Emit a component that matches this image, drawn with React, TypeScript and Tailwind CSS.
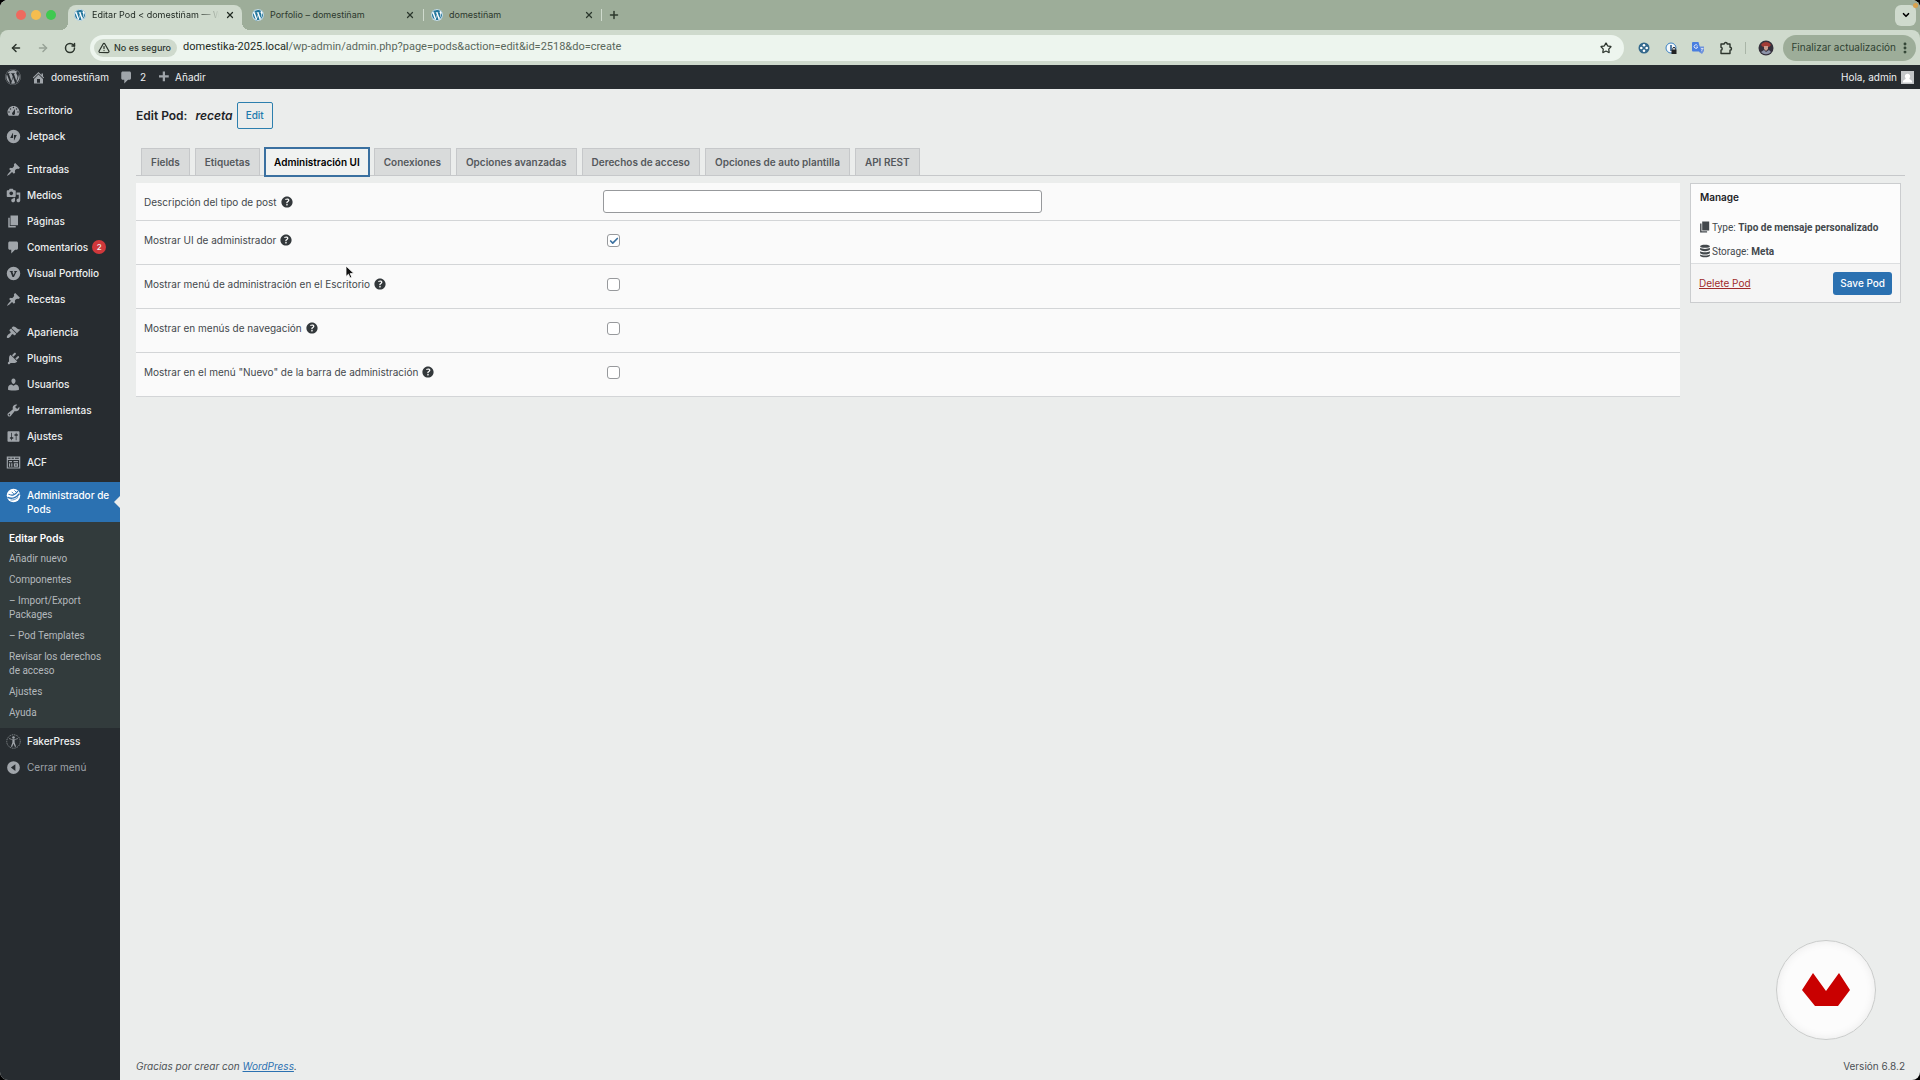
import type { ReactNode } from 'react'
import {
  ArrowLeft,
  ArrowRight,
  Check,
  ChevronDown,
  EllipsisVertical,
  Plus,
  RotateCw,
  Star,
  TriangleAlert,
  X,
} from 'lucide-react'
import { FaWordpress } from 'react-icons/fa'
import clsx from 'clsx'

type IconProps = { className?: string }

/* Dashicons, 20x20 grid */
const DASHICONS = {
  home: 'M16 8.5l1.53 1.53-1.06 1.06L10 4.6l-6.47 6.49-1.06-1.06L10 2.5l4 4v-2h2v4zm-6-2.46l6 5.99V18H4v-5.97zM12 17v-5H8v5h4z',
  plus: 'M17 7v3h-5v5H9v-5H4V7h5V2h3v5h5z',
  dashboard:
    'M3.76 17h12.48c1.1-1.37 1.76-3.11 1.76-5 0-4.42-3.58-8-8-8s-8 3.58-8 8c0 1.89.66 3.63 1.76 5zM10 5c.55 0 1 .45 1 1s-.45 1-1 1-1-.45-1-1 .45-1 1-1zM6 7c.55 0 1 .45 1 1s-.45 1-1 1-1-.45-1-1 .45-1 1-1zm8 0c.55 0 1 .45 1 1s-.45 1-1 1-1-.45-1-1 .45-1 1-1zm-5.37 5.55L12 8v6c0 1.1-.9 2-2 2s-2-.9-2-2c0-.57.24-1.08.63-1.45zM4 11c.55 0 1 .45 1 1s-.45 1-1 1-1-.45-1-1 .45-1 1-1zm12 0c.55 0 1 .45 1 1s-.45 1-1 1-1-.45-1-1 .45-1 1-1z',
  jetpack: 'M10 1a9 9 0 100 18 9 9 0 000-18zM9.4 11.9H5.6L9.4 4.5v7.4zm1.2 3.6V8.1h3.8l-3.8 7.4z',
  pin: 'M10.44 3.02l1.82-1.82 6.36 6.35-1.83 1.82c-1.05-.68-2.48-.57-3.41.36l-.75.75c-.92.93-1.04 2.35-.35 3.41l-1.83 1.82-2.41-2.41-2.8 2.79c-.42.42-3.38 2.71-3.8 2.29s1.86-3.39 2.28-3.81l2.79-2.79L4.1 9.36l1.83-1.82c1.05.69 2.48.57 3.4-.36l.75-.75c.93-.92 1.05-2.35.36-3.41z',
  media:
    'M13 11V4c0-.55-.45-1-1-1h-1.67L9 1H5L3.67 3H2c-.55 0-1 .45-1 1v7c0 .55.45 1 1 1h10c.55 0 1-.45 1-1zM7 4.5c1.38 0 2.5 1.12 2.5 2.5S8.38 9.5 7 9.5 4.5 8.38 4.5 7 5.62 4.5 7 4.5zM14 6h5v10.5c0 1.38-1.12 2.5-2.5 2.5S14 17.88 14 16.5s1.12-2.5 2.5-2.5c.17 0 .34.02.5.05V9h-3V6zm-4 8.05V13h2v3.5c0 1.38-1.12 2.5-2.5 2.5S7 17.88 7 16.5 8.12 14 9.5 14c.17 0 .34.02.5.05z',
  page: 'M6 15V2h10v13H6zm-1 1h8v2H3V5h2v11z',
  comments:
    'M5 2h9c1.1 0 2 .9 2 2v7c0 1.1-.9 2-2 2h-2l-5 5v-5H5c-1.1 0-2-.9-2-2V4c0-1.1.9-2 2-2z',
  visual: 'M10 1a9 9 0 100 18 9 9 0 000-18zM5 6.5h4.2v1.2h-.8l1.9 4.4 1.5-4.4h-1V6.5h4v1.2h-.9L10.600 14.500H8.600L6 7.700H5z',
  appearance:
    'M14.48 11.06L7.41 3.99l1.5-1.5c.5-.56 2.3-.47 3.51.32 1.21.8 1.43 1.28 2.91 2.1 1.18.64 2.45 1.26 4.45.85zm-.71.71L6.7 4.7 4.93 6.47c-.39.39-.39 1.02 0 1.41l1.06 1.06c.39.39.39 1.03 0 1.42-.6.6-1.43 1.11-2.21 1.69-.35.26-.7.53-1.01.84C1.43 14.23.4 16.08 1.4 17.07c.99 1 2.84-.03 4.18-1.36.31-.31.58-.66.85-1.02.57-.78 1.08-1.61 1.69-2.21.39-.39 1.02-.39 1.41 0l1.06 1.06c.39.39 1.02.39 1.41 0z',
  plugins:
    'M13.11 4.36L9.87 7.6 8 5.73l3.24-3.24c.35-.34 1.05-.2 1.56.32.52.51.66 1.21.31 1.55zm-8 1.77l.91-1.12 9.01 9.01-1.19.84c-.71.71-2.63 1.16-3.82 1.16H6.14L4.9 17.26c-.59.59-1.54.59-2.12 0-.59-.58-.59-1.53 0-2.12l1.24-1.24v-3.88c0-1.13.4-3.19 1.09-3.89zm7.26 3.97l3.24-3.24c.34-.35 1.04-.21 1.55.31.52.51.66 1.21.31 1.55l-3.24 3.25z',
  users:
    'M10 9.25c-2.27 0-2.73-3.44-2.73-3.44C7 4.02 7.82 2 9.97 2c2.16 0 2.98 2.02 2.71 3.81 0 0-.41 3.44-2.68 3.44zm0 2.57L12.72 10c2.39 0 4.52 2.33 4.52 4.53v2.49s-3.65 1.13-7.24 1.13c-3.65 0-7.24-1.13-7.24-1.13v-2.49c0-2.25 1.94-4.48 4.47-4.48z',
  tools:
    'M16.68 9.77c-1.34 1.34-3.3 1.67-4.95.99l-5.41 6.52c-.99.99-2.59.99-3.58 0s-.99-2.59 0-3.57l6.52-5.42c-.68-1.65-.35-3.61.99-4.95 1.28-1.28 3.12-1.62 4.72-1.06l-2.89 2.89 2.82 2.82 2.86-2.87c.53 1.58.18 3.39-1.08 4.65zM3.81 16.21c.4.39 1.04.39 1.43 0 .4-.4.4-1.04 0-1.43-.39-.4-1.03-.4-1.43 0-.39.39-.39 1.03 0 1.43z',
  settings:
    'M18 16V4c0-.55-.45-1-1-1H3c-.55 0-1 .45-1 1v12c0 .55.45 1 1 1h14c.55 0 1-.45 1-1zM8 11h1c.55 0 1 .45 1 1s-.45 1-1 1H8v1.5c0 .28-.22.5-.5.5s-.5-.22-.5-.5V13H6c-.55 0-1-.45-1-1s.45-1 1-1h1V5.5c0-.28.22-.5.5-.5s.5.22.5.5V11zm5-2h-1c-.55 0-1-.45-1-1s.45-1 1-1h1V5.5c0-.28.22-.5.5-.5s.5.22.5.5V7h1c.55 0 1 .45 1 1s-.45 1-1 1h-1v5.5c0 .28-.22.5-.5.5s-.5-.22-.5-.5V9z',
  acf: 'M1 2h18v16H1zM2.500 6.500v10h15v-10zM3 3.500v1.500h3V3.500zm4.500 0v1.500h3V3.500zm4.500 0v1.500h5V3.500zM4 8h4v1.500H4zm6 0h6v1.500h-6zM4 11h1.500v4.500H4zm3 0h1.500v4.500H7zm3.500 0H16v4.500h-5.500zm1.500 1.500v1.500h2.500v-1.500z',
  collapse: 'M10 1.500a8.500 8.500 0 100 17 8.500 8.500 0 000-17zM12.500 5.500v9L6.500 10z',
  help: 'M17 10c0-3.87-3.14-7-7-7-3.87 0-7 3.13-7 7s3.13 7 7 7c3.86 0 7-3.13 7-7zm-6.3 1.48H9.14v-.43c0-.38.08-.7.24-.98s.46-.57.88-.89c.41-.29.68-.53.81-.71.14-.18.2-.39.2-.62 0-.25-.09-.44-.28-.58-.19-.13-.45-.19-.79-.19-.58 0-1.25.19-2 .57l-.64-1.28c.87-.49 1.8-.74 2.77-.74.81 0 1.45.2 1.92.58.48.39.71.91.71 1.55 0 .43-.09.8-.29 1.11-.19.32-.57.67-1.11 1.06-.38.28-.61.49-.71.63-.1.15-.15.34-.15.57v.35zm-1.47 2.74c-.18-.17-.27-.42-.27-.73 0-.33.08-.58.26-.75s.43-.25.77-.25c.32 0 .57.09.75.26s.27.42.27.74c0 .3-.09.55-.27.72-.18.18-.43.27-.75.27-.33 0-.58-.09-.76-.26z',
  database:
    'M10 1c4 0 7 .9 7 2.200S14 5.500 10 5.500 3 4.500 3 3.200 6 1 10 1zM3 5.500c1.500 1 4 1.500 7 1.500s5.500-.5 7-1.500V8c0 1.200-3 2.200-7 2.200S3 9.200 3 8zM3 10.200c1.500 1 4 1.500 7 1.500s5.500-.5 7-1.500v2.500c0 1.200-3 2.200-7 2.200s-7-1-7-2.200zM3 14.900c1.500 1 4 1.500 7 1.500s5.500-.5 7-1.500v1.900c0 1.200-3 2.200-7 2.200s-7-1-7-2.200z',
}

type DashiconName = keyof typeof DASHICONS

function Dashicon({ name, className }: IconProps & { name: DashiconName }) {
  return (
    <svg viewBox="0 0 20 20" fill="currentColor" fillRule="evenodd" aria-hidden="true" className={clsx('shrink-0', className)}>
      <path d={DASHICONS[name]} />
    </svg>
  )
}

function PodsIcon({ className }: IconProps) {
  return (
    <svg viewBox="0 0 20 20" aria-hidden="true" className={className}>
      <circle cx="10" cy="10" r="9" fill="#fff" />
      <g fill="none" stroke="#2e72b2" strokeLinecap="round">
        <path d="M4 8.500c3.500 2 8.500 1 11.500-4" strokeWidth="1.500" />
        <path d="M2.500 12.500c5 2.500 11.500.5 15-4.500" strokeWidth="1.800" />
        <path d="M8 5.500l2 2M11.500 3.500l2 2" strokeWidth="1.200" />
        <path d="M6.500 16c3.500.5 7-1 9.500-3.500" strokeWidth="1" />
      </g>
    </svg>
  )
}

function FakerPressIcon({ className }: IconProps) {
  return (
    <svg viewBox="0 0 20 20" aria-hidden="true" className={className}>
      <circle cx="10" cy="10" r="9" fill="none" stroke="currentColor" strokeWidth="1" strokeDasharray="1.500 1" />
      <circle cx="10" cy="4.700" r="1.700" fill="currentColor" />
      <path d="M4 6.800l4.500 1v3.400L6.500 17h1.700L10 12.500l1.800 4.500h1.700l-2-5.800V7.800l4.500-1-.3-1L11.500 7h-3L4.300 5.800z" fill="currentColor" />
    </svg>
  )
}

type MenuItem = {
  label: string
  icon: DashiconName
  count?: number
}

const MENU_GROUPS: MenuItem[][] = [
  [
    { label: 'Escritorio', icon: 'dashboard' },
    { label: 'Jetpack', icon: 'jetpack' },
  ],
  [
    { label: 'Entradas', icon: 'pin' },
    { label: 'Medios', icon: 'media' },
    { label: 'Páginas', icon: 'page' },
    { label: 'Comentarios', icon: 'comments', count: 2 },
    { label: 'Visual Portfolio', icon: 'visual' },
    { label: 'Recetas', icon: 'pin' },
  ],
  [
    { label: 'Apariencia', icon: 'appearance' },
    { label: 'Plugins', icon: 'plugins' },
    { label: 'Usuarios', icon: 'users' },
    { label: 'Herramientas', icon: 'tools' },
    { label: 'Ajustes', icon: 'settings' },
    { label: 'ACF', icon: 'acf' },
  ],
]

const SUBMENU = [
  'Editar Pods',
  'Añadir nuevo',
  'Componentes',
  '– Import/Export Packages',
  '– Pod Templates',
  'Revisar los derechos de acceso',
  'Ajustes',
  'Ayuda',
]

const TABS = [
  'Fields',
  'Etiquetas',
  'Administración UI',
  'Conexiones',
  'Opciones avanzadas',
  'Derechos de acceso',
  'Opciones de auto plantilla',
  'API REST',
]

const CHECKBOX_ROWS = [
  { id: 'show-ui', label: 'Mostrar UI de administrador', checked: true },
  { id: 'show-in-menu', label: 'Mostrar menú de administración en el Escritorio', checked: false },
  { id: 'show-in-nav-menus', label: 'Mostrar en menús de navegación', checked: false },
  { id: 'show-in-admin-bar', label: 'Mostrar en el menú "Nuevo" de la barra de administración', checked: false },
]

function Favicon() {
  return (
    <span className="flex size-3 shrink-0 items-center justify-center rounded-full bg-white">
      <FaWordpress className="size-3 text-[#21759b]" />
    </span>
  )
}

function BrowserTab({ title, active }: { title: string; active?: boolean }) {
  return (
    <div
      className={clsx(
        'flex items-center gap-1.5 pl-1.5 pr-[7px] text-[9px]',
        active
          ? "relative mt-[5px] h-[25px] w-[174px] rounded-t-lg bg-[#cfdacd] pb-[5px] text-[#222b24] before:absolute before:-left-2 before:bottom-0 before:size-2 before:bg-[radial-gradient(circle_at_0_0,transparent_8px,#cfdacd_8px)] before:content-[''] after:absolute after:-right-2 after:bottom-0 after:size-2 after:bg-[radial-gradient(circle_at_100%_0,transparent_8px,#cfdacd_8px)] after:content-['']"
          : 'h-[30px] w-[176px] text-[#2c382d]'
      )}
    >
      <Favicon />
      <span
        className={clsx(
          'min-w-0 flex-1 overflow-hidden whitespace-nowrap',
          active && '[mask-image:linear-gradient(to_right,#000_85%,transparent)]'
        )}
      >
        {title}
      </span>
      <button type="button" aria-label="Cerrar pestaña">
        <X className="size-2.5" strokeWidth={3} />
      </button>
    </div>
  )
}

function TabStrip() {
  return (
    <div className="flex h-[30px] items-center pl-4 pr-1">
      <div className="mr-3 flex gap-[5px]">
        <span className="size-2.5 rounded-full bg-[#ee6a5f]" />
        <span className="size-2.5 rounded-full bg-[#f5bd4f]" />
        <span className="size-2.5 rounded-full bg-[#3fc950]" />
      </div>
      <BrowserTab title="Editar Pod < domestiñam — W" active />
      <div className="ml-1 flex items-center">
        <BrowserTab title="Porfolio – domestiñam" />
        <span className="mx-px h-3 w-px bg-[#cfdacd]" />
        <BrowserTab title="domestiñam" />
        <span className="h-3 w-px bg-[#cfdacd]" />
      </div>
      <button type="button" aria-label="Nueva pestaña" className="ml-1.5">
        <Plus className="size-3 text-[#2c382d]" strokeWidth={3} />
      </button>
      <button
        type="button"
        aria-label="Buscar pestañas"
        className="relative ml-auto flex size-[21px] items-center justify-center rounded-md bg-[#cfdacd]"
      >
        <ChevronDown className="size-2.5" strokeWidth={4} />
        <span className="absolute -right-0.5 -top-0.5 size-[5px] rounded-full bg-[#d9a14c]" />
      </button>
    </div>
  )
}

function Toolbar() {
  return (
    <div className="flex h-[35px] items-center rounded-t-lg bg-[#cfdacd] pl-2.5 pr-1 text-[#2c352d]">
      <div className="flex items-center gap-[15px]">
        <button type="button" aria-label="Atrás">
          <ArrowLeft className="size-3" strokeWidth={3} />
        </button>
        <button type="button" aria-label="Adelante" className="text-[#98a397]">
          <ArrowRight className="size-3" strokeWidth={3} />
        </button>
        <button type="button" aria-label="Recargar">
          <RotateCw className="size-3" strokeWidth={3} />
        </button>
      </div>
      <div className="ml-3.5 flex h-[26px] min-w-0 flex-1 items-center rounded-full bg-[#edf5ee] pl-1 pr-3">
        <span className="flex h-[18px] items-center gap-1 rounded-full bg-[#cfdacd] px-1 pr-1.5 text-[9px] font-medium">
          <TriangleAlert className="size-3" strokeWidth={2.5} />
          No es seguro
        </span>
        <span className="ml-1.5 flex-1 truncate font-[Roboto,sans-serif] text-[11px] text-[#5a685c]">
          <span className="text-[#222b24]">domestika-2025.local</span>
          /wp-admin/admin.php?page=pods&amp;action=edit&amp;id=2518&amp;do=create
        </span>
        <Star className="size-3" strokeWidth={2.5} />
      </div>
      <div className="ml-3.5 flex items-center gap-[15px]">
        <svg viewBox="0 0 12 12" className="size-3" aria-hidden="true">
          <circle cx="6" cy="6" r="5.500" fill="#33688c" />
          <g fill="#fff">
            <circle cx="6" cy="3.300" r="1.300" />
            <circle cx="6" cy="8.700" r="1.300" />
            <circle cx="3.300" cy="6" r="1.300" />
            <circle cx="8.700" cy="6" r="1.300" />
          </g>
        </svg>
        <svg viewBox="0 0 12 12" className="size-3" aria-hidden="true">
          <circle cx="6" cy="6" r="5" fill="#f4f8fb" stroke="#3b82c4" />
          <path d="M5.200 3h1.600v6H5.200z" fill="#2d5f92" />
          <path d="M6.500 7.500h5V12h-5z" fill="#222" />
          <path d="M7.700 7.500V6.700a1.300 1.300 0 012.600 0v.8" fill="none" stroke="#222" />
        </svg>
        <svg viewBox="0 0 12 12" className="size-3" aria-hidden="true">
          <path d="M7 4.500h5V9l-2 3-3-2z" fill="#6f93dc" />
          <path d="M1 0h5.500l2.500 9.500H1a1 1 0 01-1-1V1a1 1 0 011-1z" fill="#4a7fe0" />
          <path d="M5.500 3.600A1.800 1.800 0 105.700 5H4.300" fill="none" stroke="#fff" strokeWidth=".8" />
          <path d="M9 6.500h2.500M10.300 6.500c0 1.500-.5 2.200-1.200 2.700" fill="none" stroke="#fff" strokeWidth=".6" />
        </svg>
        <svg viewBox="0 0 14 14" className="size-3.5" aria-hidden="true">
          <path
            d="M2 3h3.200a1.500 1.500 0 013 0H11v3.200a1.500 1.500 0 010 3v3.300H2V9.300a1.600 1.600 0 000-3.100z"
            fill="none"
            stroke="currentColor"
            strokeWidth="1.400"
            strokeLinejoin="round"
          />
        </svg>
      </div>
      <span className="mx-3 h-3 w-px bg-[#a9b5a7]" />
      <svg viewBox="0 0 16 16" className="size-4" aria-hidden="true">
        <circle cx="8" cy="8" r="7.500" fill="#35313c" />
        <path d="M3 5c2-4 8-4 10 0l-2 2H5z" fill="#a33b35" />
        <path d="M6 6h4v3l-2 2-2-2z" fill="#c99c8d" />
        <path d="M3 12l3-2 2 2 3-2 2 2c-3 3-7 3-10 0z" fill="#8c93a8" />
      </svg>
      <button
        type="button"
        className="ml-[9px] flex h-[26px] items-center gap-0.5 rounded-full bg-[#9dad99] pl-2 pr-1 text-[10px] text-[#2f4232]"
      >
        Finalizar actualización
        <EllipsisVertical className="size-3.5" strokeWidth={3} />
      </button>
    </div>
  )
}

function AdminBar() {
  return (
    <div className="flex h-6 items-center bg-[#272c30] pl-[5px] pr-1.5 text-[10px] text-[#eef0f1]">
      <a href="#wp" aria-label="Acerca de WordPress">
        <FaWordpress className="size-4 text-[#a0a5aa]" />
      </a>
      <a href="#site" className="ml-2.5 flex items-center gap-[5px]">
        <Dashicon name="home" className="size-[15px] text-[#a0a5aa]" />
        domestiñam
      </a>
      <a href="#comments" className="ml-2.5 flex items-center gap-1.5">
        <Dashicon name="comments" className="size-[15px] text-[#a0a5aa]" />2
      </a>
      <a href="#new" className="ml-2.5 flex items-center gap-1">
        <Dashicon name="plus" className="size-[15px] text-[#a0a5aa]" />
        Añadir
      </a>
      <a href="#profile" className="ml-auto flex items-center gap-1">
        Hola, admin
        <svg viewBox="0 0 14 14" className="size-[13px]" aria-hidden="true">
          <path d="M0 0h14v14H0z" fill="#c3c6c8" />
          <path d="M7 3a2.700 2.700 0 012 4.700c0 1 .5 1.300 1.500 1.800 1 .5 1.500 1.500 1.500 3H2c0-1.500.5-2.500 1.500-3S5 8.700 5 7.700A2.700 2.700 0 017 3z" fill="#fff" />
        </svg>
      </a>
    </div>
  )
}

function MenuLink({ icon, children, muted }: { icon: ReactNode; children: ReactNode; muted?: boolean }) {
  return (
    <a href="#menu" className="flex h-[26px] items-center gap-1.5 pl-1.5 text-[#a0a5aa]">
      {icon}
      <span className={clsx('flex items-center', muted ? 'font-normal' : 'text-[#eef0f1]')}>{children}</span>
    </a>
  )
}

function AdminMenu() {
  return (
    <nav className="w-[120px] shrink-0 bg-[#272c30] pt-2 text-[10px] font-medium" aria-label="Menú principal">
      <div className="mb-[7px] flex flex-col gap-[7px]">
        {MENU_GROUPS.map((group) => (
          <div key={group[0].label}>
            {group.map((item) => (
              <MenuLink key={item.label} icon={<Dashicon name={item.icon} className="size-[15px]" />}>
                {item.label}
                {item.count && (
                  <span className="ml-1 flex size-[14px] items-center justify-center rounded-full bg-[#d0383b] text-[8px]">
                    {item.count}
                  </span>
                )}
              </MenuLink>
            ))}
          </div>
        ))}
      </div>

      <a href="#pods" className="relative flex gap-1.5 bg-[#2b71b1] py-1.5 pl-1.5 leading-[14px] text-white">
        <PodsIcon className="size-[15px] shrink-0" />
        <span className="pr-1">Administrador de Pods</span>
        <span className="absolute right-0 top-3.5 border-y-6 border-r-6 border-y-transparent border-r-[#ebedec]" />
      </a>
      <ul className="bg-[#323b3c] py-[5px] font-[Roboto,sans-serif] font-normal leading-[14px] text-[#b4b9bc]">
        {SUBMENU.map((label, index) => (
          <li key={label}>
            <a
              href="#pods"
              className={clsx(
                'block pb-[3px] pl-[9px] pr-3 pt-1',
                index === 0 && 'font-[Inter,sans-serif] font-semibold text-white'
              )}
            >
              {label}
            </a>
          </li>
        ))}
      </ul>
      <MenuLink icon={<FakerPressIcon className="size-[15px]" />}>FakerPress</MenuLink>
      <MenuLink icon={<Dashicon name="collapse" className="size-[15px]" />} muted>
        Cerrar menú
      </MenuLink>
    </nav>
  )
}

function PodTabs() {
  return (
    <div role="tablist" className="flex h-[29px] items-end gap-[5px] border-b border-[#c6c8ca] pl-[5px]">
      {TABS.map((label) => {
        const active = label === 'Administración UI'
        return (
          <button
            key={label}
            type="button"
            role="tab"
            aria-selected={active}
            className={clsx(
              'text-[10px] font-semibold',
              active
                ? '-mx-px -mb-0.5 h-[30px] border-2 border-[#3a70a0] bg-[#f0f2f1] px-2 text-black'
                : 'h-[27px] border border-b-0 border-[#c6c8ca] bg-[#d9dbdb] px-[9px] text-[#54585c]'
            )}
          >
            {label}
          </button>
        )
      })}
    </div>
  )
}

function FieldLabel({ htmlFor, children }: { htmlFor: string; children: ReactNode }) {
  return (
    <div className="flex w-[30%] items-center gap-0.5">
      <label htmlFor={htmlFor}>{children}</label>
      <button type="button" aria-label="Ayuda">
        <Dashicon name="help" className="size-4 text-[#33383b]" />
      </button>
    </div>
  )
}

function SettingsPanel() {
  return (
    <div className="min-w-0 flex-1 self-start bg-[#fafafa] text-[10px] leading-[14px] text-[#43484c]">
      <div className="flex h-[38px] items-center gap-px border-b border-[#d3d5d7] px-2">
        <FieldLabel htmlFor="description">Descripción del tipo de post</FieldLabel>
        <input
          id="description"
          type="text"
          className="h-[23px] w-full max-w-[439px] rounded-[3px] border border-[#97999c] bg-white px-1.5"
        />
      </div>
      {CHECKBOX_ROWS.map((row) => (
        <div key={row.id} className="flex h-11 items-start gap-px border-b border-[#d3d5d7] px-2 pt-[11px]">
          <FieldLabel htmlFor={row.id}>{row.label}</FieldLabel>
          <span className="ml-1 mt-0.5 grid size-[13px]">
            <input
              id={row.id}
              type="checkbox"
              defaultChecked={row.checked}
              className="peer col-start-1 row-start-1 size-[13px] appearance-none rounded-[3px] border border-[#97999c] bg-white"
            />
            <Check
              className="pointer-events-none invisible col-start-1 row-start-1 size-2.5 place-self-center text-[#3a70a0] peer-checked:visible"
              strokeWidth={4}
            />
          </span>
        </div>
      ))}
    </div>
  )
}

function ManageCard() {
  return (
    <aside className="w-[211px] shrink-0 self-start border border-[#cbcdcf] bg-[#fcfcfc] text-[10px] text-[#43484c]">
      <div className="flex flex-col pl-[7px] pt-[5px] font-[Roboto,sans-serif]">
        <h2 className="pl-0.5 font-[Inter,sans-serif] font-semibold leading-4 text-[#1d2327]">Manage</h2>
        <p className="mt-3.5 flex h-4 items-center whitespace-nowrap">
          <Dashicon name="page" className="size-3.5" />
          <span>
            Type: <b className="font-bold">Tipo de mensaje personalizado</b>
          </span>
        </p>
        <p className="mb-1 mt-2 flex h-4 items-center">
          <Dashicon name="database" className="size-3.5" />
          <span>
            Storage: <b className="font-bold">Meta</b>
          </span>
        </p>
      </div>
      <div className="flex h-[39px] items-center justify-between border-t border-[#dcdee0] bg-[#f5f5f5] px-2">
        <a href="#delete" className="text-[#a02b2b] underline">
          Delete Pod
        </a>
        <button type="button" className="h-[23px] rounded-[3px] bg-[#2b71b1] px-[7px] font-medium text-white">
          Save Pod
        </button>
      </div>
    </aside>
  )
}

function BrandBadge() {
  return (
    <div className="absolute bottom-10 right-11 flex size-[100px] items-center justify-center rounded-full border border-[#c9cbca] bg-[#fcfcfc] shadow-[inset_0_0_10px_rgba(0,0,0,0.08)]">
      <svg viewBox="0 0 48 34" className="w-12" aria-label="Domestika">
        <path d="M11 0l13 18L37 0l11 17-12 16H13L0 17z" fill="#c90000" />
      </svg>
    </div>
  )
}

function Cursor() {
  return (
    <svg viewBox="0 0 10 14" className="absolute left-[345px] top-[265px] w-2.5" aria-hidden="true">
      <path d="M1 1v10.500l2.500-2.300L5 13l1.800-.8-1.600-3.600H9z" fill="#111" stroke="#fff" strokeWidth=".8" />
    </svg>
  )
}

export default function App() {
  return (
    <div className="bg-black">
      <div className="relative flex min-h-screen flex-col overflow-hidden rounded-lg bg-[#ebedec] font-[Inter,'Liberation_Sans',sans-serif]">
        <header className="bg-[#9dad99]">
          <TabStrip />
          <Toolbar />
          <AdminBar />
        </header>
        <div className="flex flex-1">
          <AdminMenu />
          <main className="flex min-w-0 flex-1 flex-col pl-4 pr-[15px] pt-[13px]">
            <div className="mb-[18px] flex h-[27px] items-center text-[12px] font-semibold text-[#1d2327]">
              <h1>
                Edit Pod: <em className="ml-[5px]">receta</em>
              </h1>
              <button
                type="button"
                className="ml-1 h-[27px] rounded-[2px] border border-[#2c7fae] px-2 text-[10px] font-medium text-[#2079ad]"
              >
                Edit
              </button>
            </div>
            <PodTabs />
            <div className="mt-[7px] flex gap-2.5 pr-1">
              <SettingsPanel />
              <ManageCard />
            </div>
            <footer className="mt-auto flex justify-between pb-1.5 text-[10px] leading-4 text-[#4c5155]">
              <p className="italic">
                Gracias por crear con{' '}
                <a href="#wordpress" className="text-[#2b71b1] underline">
                  WordPress
                </a>
                .
              </p>
              <p>Versión 6.8.2</p>
            </footer>
          </main>
        </div>
        <BrandBadge />
        <Cursor />
      </div>
    </div>
  )
}
